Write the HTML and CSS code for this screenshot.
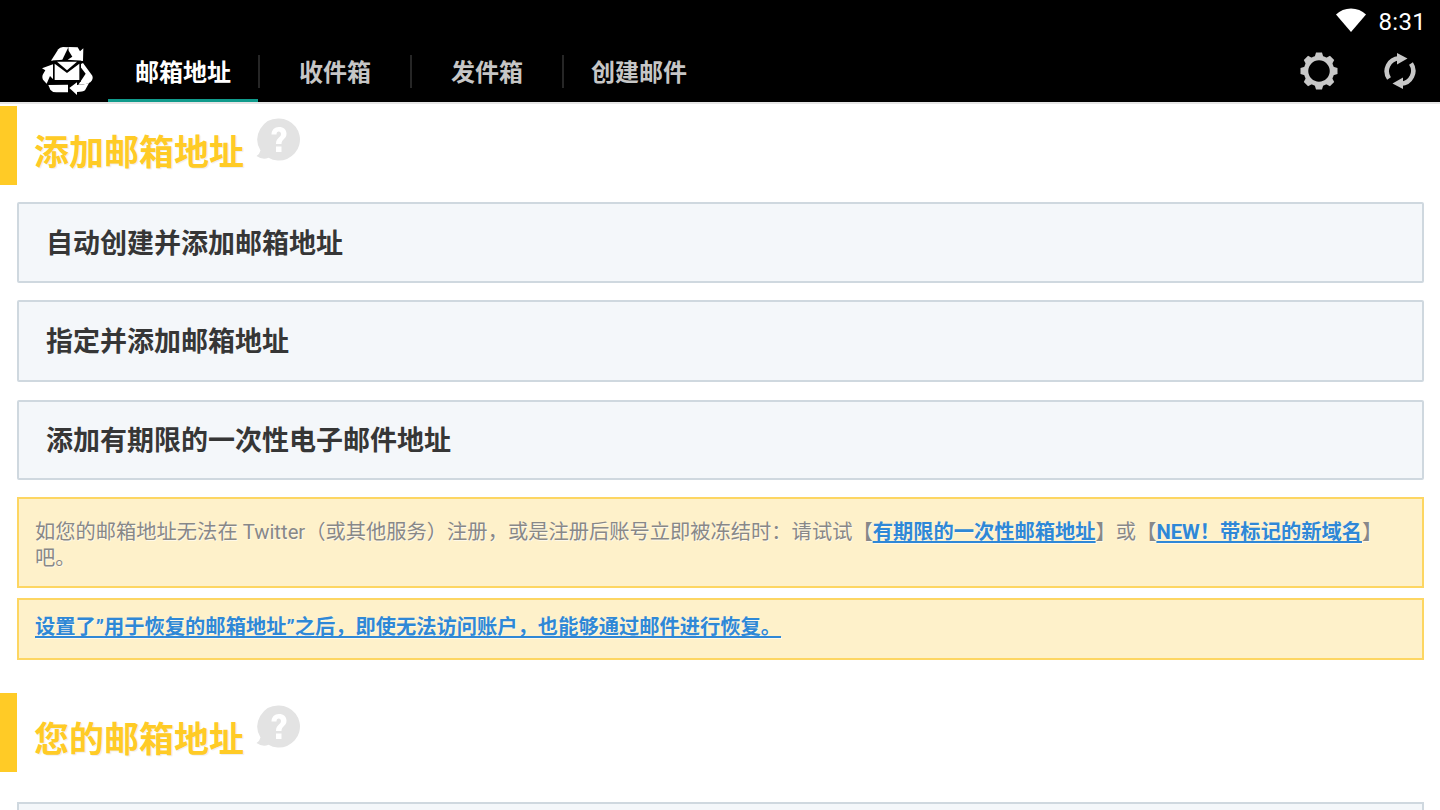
FILE: index.html
```html
<!DOCTYPE html>
<html lang="zh-CN">
<head>
<meta charset="utf-8">
<title>邮箱地址</title>
<link rel="stylesheet" href="styles.css">
</head>
<body>
<div class="statusbar">
  <svg class="wifi" width="30" height="24" viewBox="0 0 30 24"><path d="M0 6.500C4 2.500 9.200 .5 15 .5s11 2 15 6L15 24z" fill="#fff"/></svg>
  <span class="clock">8:31</span>
</div>
<nav class="navbar">
  <svg class="logo" width="52" height="48" viewBox="127 142 156 144" fill="#fff">
    <path d="M154 183L176 149Q180 143 190 142L206 143L188 180z"/>
    <path d="M206 142L234 143L241 155L251 146L250 184L204 180L218 171L207 153z"/>
    <path d="M127 206L160 194L162 240L151 229L141 252L130 240Q126 232 130 224L137 212z"/>
    <path d="M250 190L278 228Q282 238 272 248Q262 255 236 255L258 222L238 196z"/>
    <path d="M146 256L205 255V278H170Q158 278 152 270z"/>
    <path d="M209 265L232 248V256Q250 256 268 250L256 272Q250 277 232 277V286z"/>
    <path d="M160 183H244V246H160z" fill="#000"/>
    <path d="M165 192L202 220L239 192V241H165z"/>
    <path d="M172 186H232L202 212z"/>
  </svg>
  <div class="tabs">
    <a class="tab tab-active">邮箱地址</a>
    <a class="tab">收件箱</a>
    <a class="tab">发件箱</a>
    <a class="tab tab-last">创建邮件</a>
  </div>
  <div class="nav-actions">
    <svg width="38" height="38" viewBox="-19 -19 38 38" fill="#c8c8c8">
      <circle r="13" fill="none" stroke="#c8c8c8" stroke-width="4.500"/>
      <path d="M-3-18.500h6l1.500 5h-9z"/>
      <path d="M-3-18.500h6l1.500 5h-9z" transform="rotate(45)"/>
      <path d="M-3-18.500h6l1.500 5h-9z" transform="rotate(90)"/>
      <path d="M-3-18.500h6l1.500 5h-9z" transform="rotate(135)"/>
      <path d="M-3-18.500h6l1.500 5h-9z" transform="rotate(180)"/>
      <path d="M-3-18.500h6l1.500 5h-9z" transform="rotate(225)"/>
      <path d="M-3-18.500h6l1.500 5h-9z" transform="rotate(270)"/>
      <path d="M-3-18.500h6l1.500 5h-9z" transform="rotate(315)"/>
    </svg>
    <svg width="34" height="38" viewBox="-17 -19 34 38" fill="#c8c8c8">
      <path d="M-11 7.500A13 13 0 0 1-1-12.800" fill="none" stroke="#c8c8c8" stroke-width="4.600"/>
      <path d="M-3-18L7.500-12.500L-3-6.500z"/>
      <path d="M11-7.500A13 13 0 0 1 1 12.800" fill="none" stroke="#c8c8c8" stroke-width="4.600"/>
      <path d="M3 18L-7.500 12.500L3 6.500z"/>
    </svg>
  </div>
</nav>
<main class="content">
  <h2 class="section-title"><span>添加邮箱地址</span>
    <svg class="help" width="44" height="44" viewBox="0 0 44 44"><path fill="#e3e3e3" d="M23 .5a21 21 0 1 1-10.500 39.200Q7 42.500 .5 38Q3.500 36.500 4.500 32.500A21 21 0 0 1 23 .5z"/><path d="M15.500 16.500c0-4.500 3-7.500 7.500-7.500s7.500 2.700 7.500 6.700c0 5.300-5 5.300-5 10.300h-5.500c0-6.500 5-6.500 5-10 0-1.500-1-2.500-2.200-2.500-1.500 0-2.300 1.200-2.300 3zM20 28.500h5.500v5.500H20z" fill="#fff"/></svg>
  </h2>
  <div class="btn-list">
    <a class="btn">自动创建并添加邮箱地址</a>
    <a class="btn btn-tall">指定并添加邮箱地址</a>
    <a class="btn btn-short">添加有期限的一次性电子邮件地址</a>
  </div>
  <div class="notice notice-main">如您的邮箱地址无法在 Twitter（或其他服务）注册，或是注册后账号立即被冻结时：请试试【<a class="link">有期限的一次性邮箱地址</a>】或【<a class="link">NEW！带标记的新域名</a>】吧。</div>
  <div class="notice notice-link"><a class="link">设置了”用于恢复的邮箱地址”之后，即使无法访问账户，也能够通过邮件进行恢复。</a></div>
  <h2 class="section-title section-second"><span>您的邮箱地址</span>
    <svg class="help" width="44" height="44" viewBox="0 0 44 44"><path fill="#e3e3e3" d="M23 .5a21 21 0 1 1-10.500 39.200Q7 42.500 .5 38Q3.500 36.500 4.500 32.500A21 21 0 0 1 23 .5z"/><path d="M15.500 16.500c0-4.500 3-7.500 7.500-7.500s7.500 2.700 7.500 6.700c0 5.300-5 5.300-5 10.300h-5.500c0-6.500 5-6.500 5-10 0-1.500-1-2.500-2.200-2.500-1.500 0-2.300 1.200-2.300 3zM20 28.500h5.500v5.500H20z" fill="#fff"/></svg>
  </h2>
  <div class="address-row"></div>
</main>
</body>
</html>
```

FILE: styles.css
```css
* { box-sizing: border-box; }
html, body { margin: 0; height: 810px; overflow: hidden; background: #fff; }
body { font-family: Roboto, "Noto Sans CJK SC", sans-serif; }

.statusbar {
  height: 36px; background: #000; color: #fff;
  display: flex; align-items: center; justify-content: flex-end;
  padding: 0 14px 0 0; gap: 13px;
}
.wifi { margin-top: 4px; }
.clock { font-size: 24px; line-height: 36px; letter-spacing: .3px; padding-top: 4px; height: 36px; }

.navbar {
  height: 68px; background: #000; border-bottom: 2px solid #e5e5e5;
  display: flex; align-items: stretch; padding-left: 42px;
}
.logo { margin-top: 11px; flex: none; }
.tabs { display: flex; margin-left: 14px; align-items: stretch; }
.tab {
  width: 152px; height: 66px; padding: 5px 2px 0 0; position: relative;
  display: flex; align-items: center; justify-content: center;
  color: #c6c6c6; font-size: 24px; font-weight: 700;
  border-bottom: 3px solid transparent;
}
.tab::after {
  content: ""; position: absolute; right: 0; top: 19px; width: 2px; height: 33px; background: #262626;
}
.tab-last::after { display: none; }
.tab-active { color: #fff; width: 150px; margin-right: 2px; padding-right: 0; border-bottom-color: #109b8c; }
.tab-active::after { right: -2px; }
.nav-actions { margin-left: auto; display: flex; align-items: center; gap: 45px; padding: 4px 23px 0 0; }

.section-title {
  margin: 2px 0 0; height: 79px; border-left: 17px solid #ffcb26;
  display: flex; align-items: flex-start; padding-left: 17px;
  color: #ffcb26; font-size: 35px; font-weight: 700; line-height: 50px;
  text-shadow: 1px 1px 1px #eee;
}
.section-title span { margin-top: 23px; }
.help { margin: 12px 0 0 12px; flex: none; }
.section-second { margin-top: 33px; }

.btn-list { display: flex; flex-direction: column; gap: 17px; margin: 17px 16px 0 17px; }
.btn {
  height: 81px; display: flex; align-items: center; padding: 0 0 2px 27px;
  background: #f4f7fa; border: 2px solid #cfd8df; border-radius: 2px;
  color: #363636; font-size: 27px; font-weight: 700;
}
.btn-tall { height: 82px; padding-bottom: 4px; }
.btn-short { height: 80px; margin-top: 1px; padding-bottom: 4px; }

.notice {
  margin: 0 16px 0 17px; padding: 18px 16px;
  background: #fef1ca; border: 2px solid #fdd662;
  color: #888; font-size: 20.280px; line-height: 26px;
  text-shadow: 1px 1px 0 rgba(255,255,255,.6);
}
.notice-main { margin-top: 17px; height: 91px; padding-top: 20px; }
.notice-link { margin-top: 10px; height: 62px; padding-top: 14px; }
.link { color: #2f88d6; font-weight: 700; text-decoration: underline; }

.address-row {
  margin: 30px 16px 0 17px; height: 80px;
  background: #f4f7fa; border: 2px solid #cfd8df;
}
```
